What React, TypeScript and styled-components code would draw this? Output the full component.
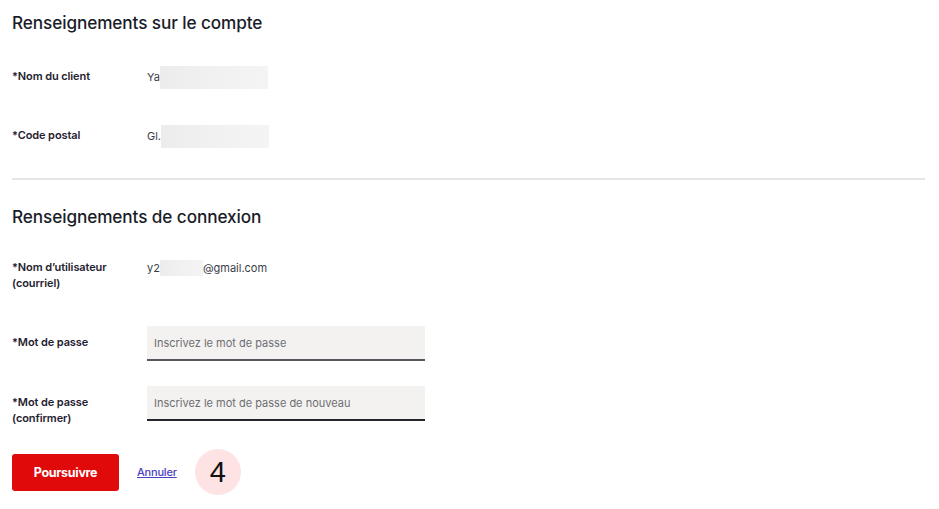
import React from "react";
import styled, { createGlobalStyle } from "styled-components";

const Global = createGlobalStyle`
  html, body { margin: 0; padding: 0; background: #fff; }
  body { font-family: Inter, "Noto Sans", sans-serif; color: #1b1f2a; }
  * { box-sizing: border-box; }
`;

const Page = styled.div`
  width: 939px;
  height: 509px;
  padding: 0 15px 0 12px;
  display: flex;
  flex-direction: column;
`;

const Section = styled.section<{ $pt: number }>`
  padding-top: ${(p) => p.$pt}px;
  display: flex;
  flex-direction: column;
`;

const Heading = styled.h2`
  margin: 0;
  font-size: 17.2px;
  font-weight: 500;
  line-height: 24px;
  color: #1a1d29;
  letter-spacing: -0.1px;
`;

const Row = styled.div<{ $mt: number; $h: number }>`
  margin-top: ${(p) => p.$mt}px;
  height: ${(p) => p.$h}px;
  display: grid;
  grid-template-columns: 135px 1fr;
  grid-template-rows: ${(p) => p.$h}px;
  align-items: center;
`;

const Label = styled.div<{ $pad?: number }>`
  font-size: 11px;
  font-weight: 600;
  line-height: 15.5px;
  color: #1f2230;
  letter-spacing: -0.1px;
  align-self: ${(p) => (p.$pad !== undefined ? "start" : "center")};
  padding-top: ${(p) => p.$pad ?? 0}px;
`;

const Value = styled.div<{ $top?: boolean }>`
  display: flex;
  align-items: center;
  align-self: ${(p) => (p.$top ? "start" : "center")};
  font-size: 11px;
  color: #3a3d48;
  line-height: 15px;
`;

const Blur = styled.span<{ $w: number; $h?: number }>`
  display: inline-block;
  width: ${(p) => p.$w}px;
  height: ${(p) => p.$h ?? 23}px;
  background: linear-gradient(90deg, #ececec 0%, #f1f1f1 50%, #f4f4f4 100%);
  filter: blur(0.6px);
`;

const Divider = styled.hr`
  margin: 0;
  border: 0;
  height: 2px;
  background: #e6e6e6;
  width: 913px;
`;

const Input = styled.input<{ $border: string }>`
  width: 278px;
  height: 35px;
  border: 0;
  border-bottom: 2px solid ${(p) => p.$border};
  background: #f3f2f1;
  padding: 1px 7px 0;
  font-family: Inter, "Noto Sans", sans-serif;
  font-size: 11px;
  color: #333;
  outline: none;
  &::placeholder { color: #6d6e72; }
`;

const Actions = styled.div`
  margin-top: 28px;
  display: flex;
  align-items: center;
`;

const Button = styled.button`
  width: 107px;
  height: 37px;
  background: #e10a0a;
  border: 0;
  border-radius: 3px;
  color: #fff;
  font-family: Inter, "Noto Sans", sans-serif;
  font-weight: 700;
  font-size: 12.5px;
  letter-spacing: -0.3px;
`;

const Link = styled.a`
  margin-left: 18px;
  font-size: 11px;
  font-weight: 500;
  color: #4b3fc2;
  text-decoration: underline;
  letter-spacing: -0.2px;
`;

const Badge = styled.div`
  margin-left: 18px;
  width: 46px;
  height: 46px;
  border-radius: 50%;
  background: #fde3e4;
  display: flex;
  align-items: center;
  justify-content: center;
  font-family: "Liberation Sans", Arial, sans-serif;
  font-size: 29px;
  color: #111;
`;

export default function App() {
  return (
    <>
      <Global />
      <Page>
        <Section $pt={11}>
          <Heading>Renseignements sur le compte</Heading>
          <Row $mt={30} $h={24}>
            <Label>*Nom du client</Label>
            <Value>Ya<Blur $w={108} /></Value>
          </Row>
          <Row $mt={35} $h={24}>
            <Label>*Code postal</Label>
            <Value>Gl.<Blur $w={108} /></Value>
          </Row>
        </Section>
        <Section $pt={30}>
          <Divider />
        </Section>
        <Section $pt={25}>
          <Heading>Renseignements de connexion</Heading>
          <Row $mt={31} $h={30}>
            <Label $pad={0}>*Nom d’utilisateur<br />(courriel)</Label>
            <Value $top>y2<Blur $w={43} $h={16} />@gmail.com</Value>
          </Row>
          <Row $mt={36} $h={35}>
            <Label $pad={9}>*Mot de passe</Label>
            <Input $border="#55575c" placeholder="Inscrivez le mot de passe" />
          </Row>
          <Row $mt={25} $h={35}>
            <Label $pad={9}>*Mot de passe<br />(confirmer)</Label>
            <Input $border="#23252b" placeholder="Inscrivez le mot de passe de nouveau" />
          </Row>
          <Actions>
            <Button>Poursuivre</Button>
            <Link href="#">Annuler</Link>
            <Badge>4</Badge>
          </Actions>
        </Section>
      </Page>
    </>
  );
}
